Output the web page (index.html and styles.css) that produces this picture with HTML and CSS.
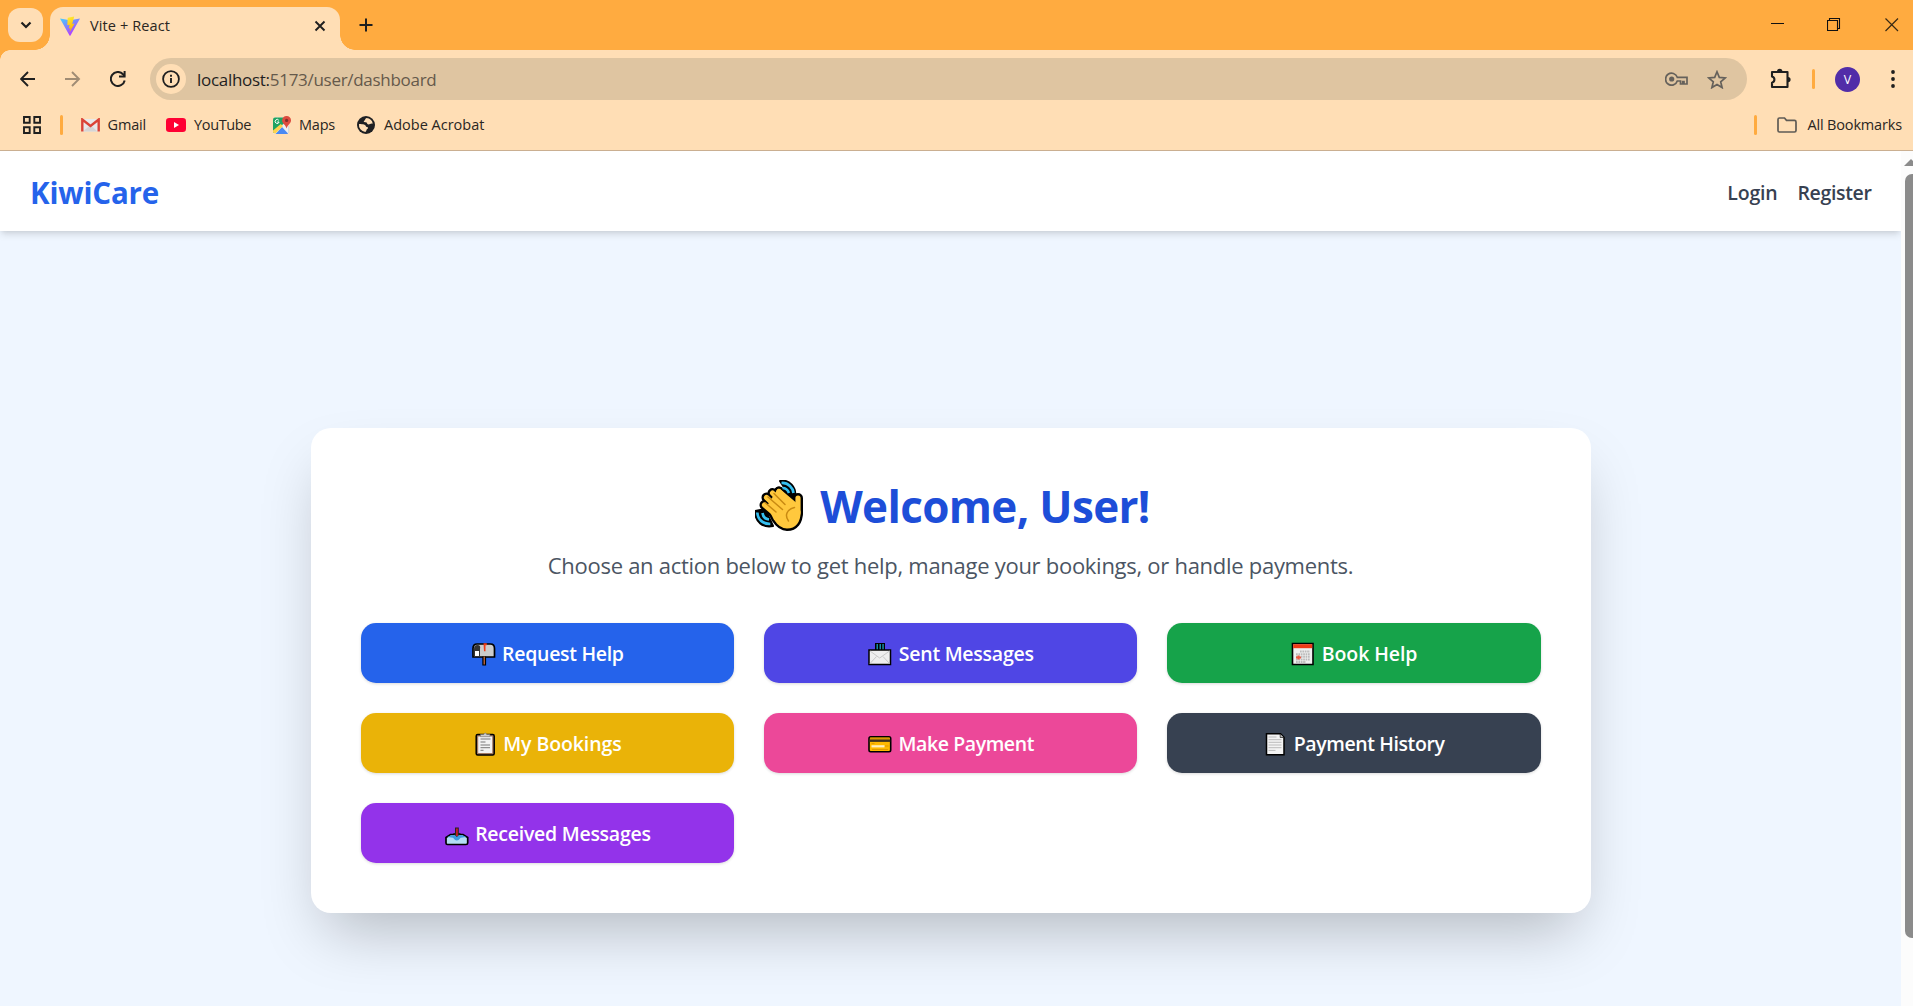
FILE: index.html
```html
<!DOCTYPE html>
<html lang="en">
<head>
<meta charset="utf-8">
<title>Vite + React</title>
<link rel="stylesheet" href="styles.css">
</head>
<body>
<div class="browser">
  <div class="tabstrip">
    <button class="tab-search" aria-label="Search tabs">
      <svg width="12" height="8" viewBox="0 0 12 8"><path d="M1.5 1.5 6 6l4.500-4.500" fill="none" stroke="#1f1f1f" stroke-width="2.200"/></svg>
    </button>
    <div class="tab">
      <svg class="vite" width="20" height="20" viewBox="0 0 20 20">
        <defs>
          <linearGradient id="va" x1="0" y1="0" x2=".6" y2="1"><stop offset="0" stop-color="#41d1ff"/><stop offset="1" stop-color="#bd34fe"/></linearGradient>
          <linearGradient id="vb" x1=".4" y1="0" x2=".6" y2="1"><stop offset="0" stop-color="#ffea30"/><stop offset="1" stop-color="#ffa800"/></linearGradient>
        </defs>
        <path d="M0 2.500 10 4.200 20 2.500 10.500 19.400q-.5.8-1 0Z" fill="url(#va)"/>
        <path d="M14.200 0.500 7.700 1.800 7.300 9.200l2.300-.5-.8 3.700 1.700-.5-.9 4.300 5-8.600-2.400.4 2-7.500Z" fill="url(#vb)"/>
      </svg>
      <span class="tab-title">Vite + React</span>
      <svg class="tab-close" width="12" height="12" viewBox="0 0 12 12"><path d="M1.500 1.500l9 9m0-9l-9 9" stroke="#1f1f1f" stroke-width="1.900"/></svg>
    </div>
    <svg class="new-tab" width="14" height="14" viewBox="0 0 14 14"><path d="M7 .5v13M.5 7h13" stroke="#1f1f1f" stroke-width="2"/></svg>
    <div class="window-buttons">
      <svg width="14" height="14" viewBox="0 0 14 14"><path d="M0 5.500h13" stroke="#111"/></svg>
      <svg width="14" height="14" viewBox="0 0 14 14"><path d="M.5 2.500h10v10H.5zM2.500 2.500V.5h10v10h-2" fill="none" stroke="#111" stroke-width="1.100"/></svg>
      <svg width="14" height="14" viewBox="0 0 14 14"><path d="M.5.5l12.500 12.500M13 .5L.5 13" stroke="#3a2a14" stroke-width="1.200"/></svg>
    </div>
  </div>

  <div class="toolbar">
    <div class="nav-icons">
      <svg width="16" height="16" viewBox="0 0 16 16"><path d="M15 8H2M8 1 1 8l7 7" fill="none" stroke="#1f1f1f" stroke-width="1.900"/></svg>
      <svg width="16" height="16" viewBox="0 0 16 16"><path d="M0 8H14M7 1l7 7-7 7" fill="none" stroke="#a08c74" stroke-width="1.900"/></svg>
      <svg width="16" height="16" viewBox="0 0 16 16"><path d="M14.700 9.500A7 7 0 1 1 13 3.200L14.500 5" fill="none" stroke="#1f1f1f" stroke-width="2"/><path d="M14.600 0v5.600H9" fill="none" stroke="#1f1f1f" stroke-width="2"/></svg>
    </div>
    <div class="omnibox">
      <span class="site-info"><svg width="18" height="18" viewBox="0 0 18 18"><circle cx="9" cy="9" r="7.900" fill="none" stroke="#1f1f1f" stroke-width="1.800"/><path d="M9 8v5M9 4.700v2" stroke="#1f1f1f" stroke-width="1.900"/></svg></span>
      <span class="url"><span class="host">localhost:</span>5173/user/dashboard</span>
      <svg class="key" width="23" height="14" viewBox="0 0 23 14"><path d="M12.300 5.300A6 6 0 1 0 12.300 9H15.500v3h2.200V9.500h1.300V12h3V5.300Z" fill="none" stroke="#65615b" stroke-width="1.700"/><circle cx="6.700" cy="7" r="2.600" fill="#65615b"/></svg>
      <svg class="star" width="20" height="19" viewBox="0 0 20 19"><path d="M10 1.800l2.300 5.600 6 .5-4.600 3.900 1.400 5.800L10 14.500l-5.100 3.100 1.400-5.800-4.600-3.900 6-.5Z" fill="none" stroke="#65615b" stroke-width="1.700"/></svg>
    </div>
    <svg class="puzzle" width="22" height="21" viewBox="0 0 22 21"><path d="M2 4H17.500V19H2V14.700A3.200 3.200 0 0 0 2 8.500Z" fill="none" stroke="#1f1f1f" stroke-width="2.100" stroke-linejoin="round"/><path d="M7 3.500a2.700 2.700 0 0 1 5.400 0ZM18 9a2.600 2.600 0 0 1 0 5.200Z" fill="#1f1f1f"/></svg>
    <i class="divider"></i>
    <span class="avatar">V</span>
    <svg class="menu" width="4" height="18" viewBox="0 0 4 18"><g fill="#1f1f1f"><circle cx="2" cy="2" r="1.900"/><circle cx="2" cy="9" r="1.900"/><circle cx="2" cy="16" r="1.900"/></g></svg>
  </div>

  <div class="bookmarks">
    <svg class="apps" width="18" height="18" viewBox="0 0 18 18"><g fill="none" stroke="#1f1f1f" stroke-width="1.900"><path d="M1 1h5.700v5.700H1zM11.300 1H17v5.700h-5.700zM1 11.300h5.700V17H1zM11.300 11.300H17V17h-5.700z"/></g></svg>
    <i class="divider"></i>
    <span class="mark mark-gmail"><svg width="19" height="14" viewBox="0 0 19 14"><path d="M0 1h19v12.500H0z" fill="#e9e9e9"/><path d="M2.500 13 9.500 7l7 6.500h-14Z" fill="#d5d5d5"/><path d="M1.300 13.500V1.500L9.500 8l8.200-6.500v12" fill="none" stroke="#db4437" stroke-width="2.400"/></svg>Gmail</span>
    <span class="mark mark-youtube"><svg width="20" height="14" viewBox="0 0 20 14"><rect width="20" height="14" rx="3.200" fill="#ff0033"/><path d="M8 4v6l5-3Z" fill="#fff"/></svg>YouTube</span>
    <span class="mark mark-maps"><svg width="18" height="18" viewBox="0 0 18 18"><path d="M2 1.500h12L16 16q0 2-2 2H2q-2 0-2-2V3.500q0-2 2-2Z" fill="#eceff1"/><path d="M2 1.500h8.500L12 6.500 0 17V3.500q0-2 2-2Z" fill="#1ea362"/><path d="M2.500 18 9 11l6 6.500q-.5.500-1 .5Z" fill="#4a89f3"/><path d="M0 14.500 7.800 8 10 10 2.200 17.800Q0 17.500 0 15.800Z" fill="#ffd24d"/><path d="M15 9.500v8q1.300-.4 1.300-2V10Z" fill="#d5d8dc"/><path d="M13.500 0A4.400 4.400 0 0 1 18 4.500c0 3-3.400 4-4.400 8-1-4-4.500-5-4.500-8A4.400 4.400 0 0 1 13.500 0Z" fill="#dd4b3e"/><circle cx="13.600" cy="4.400" r="1.600" fill="#822f2b"/><path d="M5.800 4.300A2 2 0 1 0 6.100 6H4.200" fill="none" stroke="#fff" stroke-width="1"/></svg>Maps</span>
    <span class="mark mark-adobe"><svg width="18" height="18" viewBox="0 0 18 18"><circle cx="9" cy="9" r="9" fill="#1f2023"/><path d="M9.500 2c-2 1-1 2.500-2.700 3-.2 1.300.8 1.200 2.200 1.300 1.500.2.700 2.200 2.500 2.200 1.500 0 2-1.300 4.300-.8A7 7 0 0 0 9.500 2ZM2 8c2.500.2 3.500 0 5.500.7 1.500.6 1 2 2.500 2.300 1.300.3 1.300 1.300.3 2-1.200.7-.6 2-2 3A7 7 0 0 1 2 8Z" fill="#ffdeb5"/></svg>Adobe Acrobat</span>
    <i class="divider divider-right"></i>
    <span class="mark mark-all"><svg width="20" height="16" viewBox="0 0 20 16"><path d="M1 2.500Q1 1 2.500 1H7.500L9.500 3.400H17.500Q19 3.400 19 5V13.400Q19 15 17.500 15H2.500Q1 15 1 13.400Z" fill="none" stroke="#5f5b55" stroke-width="1.700"/></svg>All Bookmarks</span>
  </div>
</div>

<div class="viewport">
  <div class="page">
    <nav class="site-nav">
      <span class="brand">KiwiCare</span>
      <span class="link">Login</span>
      <span class="link link-register">Register</span>
    </nav>
    <main>
      <section class="card">
        <h1>
          <svg width="48" height="51" viewBox="0 0 48 51">
            <defs>
              <g id="hand" stroke-linecap="round" stroke-linejoin="round">
                <path d="M24 11.500 36 24M17.500 13 32 28M11.500 17.500 28 33M9.500 25 26 39M43 18v15"/>
                <path d="M24 11.500 40 25 43 32C43 41 39 46 32 46 28 46 25 44 21 38L15 26Z"/>
              </g>
            </defs>
            <path d="M25 1C34-1 42 7 40 18l-8-6ZM0 31l10-2 8 17C8 48 0 42 0 31Z" fill="#000" stroke="#000" stroke-width="2" stroke-linejoin="round"/>
            <use href="#hand" fill="#000" stroke="#000" stroke-width="10"/>
            <path d="M26.500 3C33.500 2.500 38 8 38.500 13M27.500 8c3.500 0 5.500 2.500 6.500 5M2.300 32.500c.5 7 5.500 11.500 13 11.500M7.500 33c.5 3.500 3 6 6.500 6.500" fill="none" stroke="#35bff0" stroke-width="2.700"/>
            <use href="#hand" fill="#ffc83d" stroke="#ffc83d" stroke-width="5.200"/>
            <path d="M10.500 23 21 32M13 17l14.500 12.500M19 13.500l11 11M39.500 27.500c-8 2-10 8-6 13.500" fill="none" stroke="#c98a12" stroke-width="1.500" stroke-linecap="round"/>
          </svg>
          <span>Welcome, User!</span>
        </h1>
        <p class="lead">Choose an action below to get help, manage your bookings, or handle payments.</p>
        <div class="actions">
          <button class="action blue"><svg viewBox="0 0 24 24"><path d="M1 15V6.500Q1 2 5 2H18.500Q22.500 2 22.500 6.500V15Z" fill="#ccc" stroke="#000" stroke-width="1.700"/><path d="M2 14V7q0-4 3.500-4T8 7v7Z" fill="#333"/><path d="M3 9h4v5H3z" fill="#fff"/><path d="M11.500 1.300h3.300v2h-1.300v6H12Z" fill="#f03a17"/><path d="M10.300 14.500h3.800v9h-3.800z" fill="#000"/><path d="M11.500 14.500h1.500v8h-1.500z" fill="#b0603a"/></svg><span>Request Help</span></button>
          <button class="action indigo sent"><svg viewBox="0 0 24 24"><path d="M7 1h10v8H7z" fill="#000"/><path d="M8.500 2h1.500v6H8.500zM11.500 2H13v6h-1.500zM14.300 2h1.500v6h-1.500z" fill="#168ba5"/><path d="M1 8h21.500v14.500H1z" fill="#eee" stroke="#000" stroke-width="1.500"/><path d="M2 9l9.700 7L21.500 9M2 21.500l6.500-7M21.500 21.500l-6.500-7" fill="none" stroke="#c8c8c8"/></svg><span>Sent Messages</span></button>
          <button class="action green book"><svg viewBox="0 0 24 24"><path d="M1.500 1.500h20.500v21H1.500z" fill="#f0f0f0" stroke="#000" stroke-width="1.600"/><path d="M2.200 2.200h19v4h-19z" fill="#f03a17"/><path d="M9 9.500h10M5 12.200h14M5 14.800h14M5 17.500h14M5 20h10" stroke="#bbb" stroke-width="2" stroke-dasharray="1.700 .7"/><path d="M5 15.500h5M7.500 13.500v4" stroke="#ee5a42" stroke-width="2"/></svg><span>Book Help</span></button>
          <button class="action yellow bookings"><svg viewBox="0 0 24 24"><rect x="3.200" y="2.500" width="18" height="20.500" rx="1.500" fill="#a27a62" stroke="#000" stroke-width="1.500"/><path d="M5.200 4.500h14v16.500h-14z" fill="#f2f2f2"/><path d="M7.500 4.700V2.500h3q1.700-3 3.400 0h3v2.200Z" fill="#ccc" stroke="#777" stroke-width=".6"/><path d="M7.500 7h10M7.500 10h5M7.500 13h9.500M7.500 15.700h9.500M7.500 18.300h3" stroke="#777" stroke-width="1"/></svg><span>My Bookings</span></button>
          <button class="action pink pay"><svg viewBox="0 0 24 24"><rect x="1" y="4.800" width="21.700" height="15" rx="1.700" fill="#ffb900" stroke="#000" stroke-width="1.600"/><path d="M2 5.700h19.700v2H2z" fill="#d89500"/><path d="M1.500 7.500h20.700v2.400H1.500z" fill="#3d3122"/><path d="M3.500 14.300h13" stroke="#fff0c0" stroke-width="2.200"/><path d="M17 14h3.500M3.500 11.500h3M4 17.500h16" stroke="#e09b00" stroke-width="1"/></svg><span>Make Payment</span></button>
          <button class="action slate history"><svg viewBox="0 0 24 24"><path d="M3.500 1.700H17.500L21 5.200V22.700H3.500Z" fill="#f3f3f3" stroke="#000" stroke-width="1.500"/><path d="M17.200 2v3.500h3.500" fill="#bbb" stroke="#000" stroke-width=".6"/><path d="M5.500 5h8M5.500 7.700h13M5.500 10.300h13M5.500 13h13M5.500 15.700h13M5.500 18.400h7" stroke="#bbb" stroke-width="1"/></svg><span>Payment History</span></button>
          <button class="action purple received"><svg viewBox="0 0 24 24"><path d="M1 21V15.500L5.500 12.500H18L22.700 15.500V21Q22.700 22.500 21 22.500H2.500Q1 22.500 1 21Z" fill="#b4dcf5" stroke="#000" stroke-width="1.700"/><path d="M2.500 15 6 13.300H17.500l3.700 1.700-5.500.8q-3.900 5.500-7.700 0Z" fill="#3d9be0"/><path d="M10 5.500h3.800v5.500h2.200L11.900 15 7.800 11h2.200Z" fill="#222"/><path d="M11.200 6.500h1.500v7.500h-1.500z" fill="#e81c24"/></svg><span>Received Messages</span></button>
        </div>
      </section>
    </main>
  </div>
  <div class="scrollbar">
    <i class="scroll-up"></i>
    <i class="thumb"></i>
  </div>
</div>
</body>
</html>
```
FILE: styles.css
```css
* { box-sizing: border-box; }
body {
  margin: 0;
  width: 1913px;
  height: 1006px;
  overflow: hidden;
  display: flex;
  flex-direction: column;
  font-family: "Open Sans", "Noto Sans", sans-serif;
}
svg { flex: none; display: block; }
button { border: 0; padding: 0; font: inherit; }

/* Browser frame */
.browser { height: 151px; background: #ffdeb5; border-bottom: 1px solid #cbb092; font-size: 14.5px; color: #2a2622; }
.tabstrip { height: 50px; background: #ffab40; display: flex; align-items: flex-start; padding-left: 8px; }
.tab-search { width: 35px; height: 34px; margin-top: 8px; border-radius: 12px; background: #ffdeb5; display: flex; align-items: center; justify-content: center; }
.tab {
  position: relative;
  width: 290px; height: 43px; margin: 7px 0 0 7px;
  padding: 0 14px 0 10px;
  display: flex; align-items: center;
  background: #ffdeb5;
  border-radius: 13px 13px 0 0;
}
.tab::before, .tab::after { content: ""; position: absolute; bottom: 0; width: 15px; height: 15px; }
.tab::before { left: -15px; background: radial-gradient(circle at 0 0, transparent 14.500px, #ffdeb5 15px); }
.tab::after { right: -15px; background: radial-gradient(circle at 100% 0, transparent 14.500px, #ffdeb5 15px); }
.vite { margin: -5px 10px 0 0; }
.tab-title { flex: 1; letter-spacing: .12px; line-height: 20px; margin-top: -5px; }
.tab-close { margin-top: -6px; }
.new-tab { margin: 18px 0 0 18.500px; }
.window-buttons { margin-left: auto; padding: 18px 14px 0 0; display: flex; gap: 43px; }
.window-buttons svg:nth-child(1) { margin-right: -1px; }
.window-buttons svg:nth-child(2) { margin-right: 1px; }

.toolbar { height: 58px; padding: 0 0 0 20px; display: flex; align-items: center; background: radial-gradient(circle at 10px 10px, #ffdeb5 9.500px, #ffab40 10px) 0 0 / 10px 10px no-repeat; }
.nav-icons { display: flex; gap: 29px; width: 130px; flex: none; }
.omnibox { flex: none; width: 1597px; height: 42px; border-radius: 21px; background: #dfc5a1; display: flex; align-items: center; padding: 0 20px 0 6px; }
.site-info { width: 30px; height: 30px; border-radius: 50%; background: #ffdeb5; display: flex; align-items: center; justify-content: center; margin-right: 11px; }
.url { flex: 1; font-size: 17px; letter-spacing: -.29px; color: #65594b; }
.host { color: #1f1f1f; }
.key { margin-right: 19px; }
.puzzle { margin: -2px 20px 0 23px; }
.divider { flex: none; width: 3px; height: 20px; border-radius: 2px; background: #ffab40; }
.avatar { flex: none; width: 25px; height: 25px; margin: 0 31px 0 20px; border-radius: 50%; background: #512da8; color: #fff; font-size: 12.500px; line-height: 25px; text-align: center; }

.bookmarks { height: 34px; padding: 0 11px 0 23px; display: flex; align-items: center; }
.apps + .divider { margin: 0 18px 0 19px; }
.mark { display: flex; align-items: center; gap: 8px; line-height: 20px; white-space: nowrap; }
.mark-gmail { width: 85px; gap: 7.500px; letter-spacing: -.15px; }
.mark-youtube { width: 107px; letter-spacing: -.35px; }
.mark-maps { width: 84px; letter-spacing: -.2px; }
.mark-adobe { gap: 9px; }
.divider-right { margin: 0 20px 0 auto; }
.mark-all { gap: 10px; letter-spacing: -.16px; }

/* Page */
.viewport { flex: 1; display: flex; min-height: 0; }
.page { width: 1901px; background: #eff6ff; display: flex; flex-direction: column; }
.site-nav { height: 80px; padding: 2px 29.500px 0 30px; display: flex; align-items: center; background: #fff; box-shadow: 0 5px 7px -1px rgba(0,0,0,.1), 0 2px 5px -2px rgba(0,0,0,.1); font-size: 19.500px; font-weight: 600; color: #374151; }
.link { letter-spacing: -.2px; }
.brand { margin-right: auto; font-size: 29.500px; font-weight: 700; letter-spacing: -.15px; color: #2563eb; }
.link-register { margin-left: 20px; letter-spacing: -.35px; }
main { display: flex; justify-content: center; padding-top: 197px; }
.card { width: 1280px; height: 485px; padding: 50px; border-radius: 20px; background: #fff; box-shadow: 0 31px 62px -15px rgba(0,0,0,.25); }
h1 { margin: 0 0 20px; padding: 5px 0 0 4px; height: 50px; display: flex; align-items: center; justify-content: center; gap: 17px; font-size: 44px; letter-spacing: -.65px; color: #1d4ed8; line-height: 50px; }
.lead { margin: 0 0 40px; height: 35px; line-height: 35px; font-size: 22px; letter-spacing: -.28px; text-align: center; color: #4b5563; white-space: nowrap; }
.actions { display: grid; grid-template-columns: repeat(3, 1fr); gap: 30px; }
.action { height: 60px; border-radius: 15px; padding: 1px 0 0 1px; display: flex; align-items: center; justify-content: center; gap: 6.500px; color: #fff; font-size: 19.500px; font-weight: 600; letter-spacing: -.3px; box-shadow: 0 1px 3px rgba(0,0,0,.15); }
.action svg { width: 24px; height: 24px; }
.sent { letter-spacing: -.25px; }
.book { letter-spacing: -.08px; }
.bookings { letter-spacing: -.1px; padding-left: 0; }
.pay { letter-spacing: -.42px; }
.history { letter-spacing: -.4px; padding-left: 0; }
.received { letter-spacing: -.26px; }
.blue { background: #2563eb; }
.indigo { background: #4f46e5; }
.green { background: #16a34a; }
.yellow { background: #eab308; }
.pink { background: #ec4899; }
.slate { background: #374151; }
.purple { background: #9333ea; }

.scrollbar { width: 12px; background: #fcfcfc; overflow: hidden; display: flex; flex-direction: column; align-items: flex-start; padding: 8px 0 0 3px; }
.scroll-up { width: 0; height: 0; border: solid transparent; border-width: 0 7px 7px; border-bottom-color: #8b8b8b; }
.thumb { width: 15px; height: 764px; margin: 8px 0 0 1px; border-radius: 7px; background: #8b8b8b; flex: none; }
```
